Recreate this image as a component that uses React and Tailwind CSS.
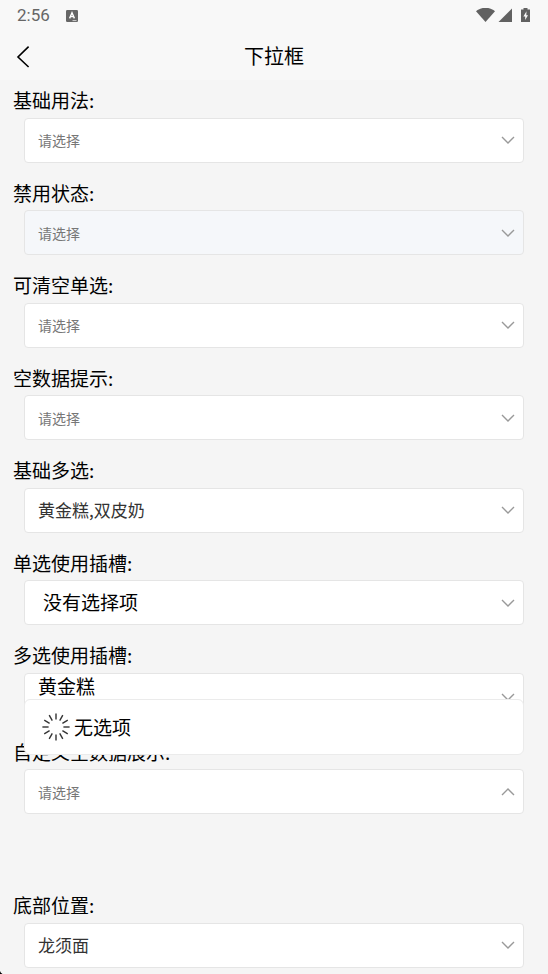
import React from 'react';

const boxClass = 'block w-full rounded border border-[#e5e5e5] bg-white text-left outline-none';

const Chevron = ({ up }) => (
  <svg
    className={`pointer-events-none absolute right-2 top-1/2 h-4 w-4 -translate-y-1/2 ${up ? 'rotate-180' : ''}`}
    viewBox="0 0 16 16"
    fill="none"
    stroke="#999999"
    strokeWidth="1.4"
  >
    <path d="M2 5 L8 11 L14 5" />
  </svg>
);

const Field = ({ id, label, open, className = 'mb-4', children }) => (
  <div className={className}>
    <label htmlFor={id} className="mb-[3px] block text-[19px] leading-normal text-black">{label}</label>
    <div className="relative mx-[11px]">
      {children}
      <Chevron up={open} />
    </div>
  </div>
);

const PlainSelect = ({ id, options = [], disabled }) => (
  <select
    id={id}
    disabled={disabled}
    defaultValue=""
    className={`${boxClass} h-[45px] appearance-none px-[13px] text-sm text-[#777777] disabled:bg-[#f5f7fa] disabled:opacity-100`}
  >
    <option value="">请选择</option>
    {options.map((o) => <option key={o} value={o}>{o}</option>)}
  </select>
);

const Spinner = () => (
  <svg className="h-7 w-7" viewBox="0 0 28 28" stroke="#333333" strokeWidth="1.4">
    {[0, 30, 60, 90, 120, 150, 180, 210, 240, 270, 300, 330].map((deg) => (
      <line key={deg} x1="14" y1="0.4" x2="14" y2="6.6" transform={`rotate(${deg} 14 14)`} />
    ))}
  </svg>
);

const StatusBar = () => (
  <div className="flex h-8 items-center justify-between pl-[17px] pr-4 text-[#666666]">
    <div className="flex items-center gap-4">
      <span className="font-[Roboto,sans-serif] text-[17px]">2:56</span>
      <svg className="h-3 w-3" viewBox="0 0 12 12">
        <rect width="12" height="12" rx="1.2" fill="#666666" />
        <path d="M3.6 8.4 L6 2.8 L8.4 8.4 M4.5 6.6 H7.5" fill="none" stroke="#fff" strokeWidth="1.4" />
        <path d="M6.5 10.6 H10.5" stroke="#fff" strokeWidth="0.7" />
      </svg>
    </div>
    <svg className="h-4 w-14" viewBox="0 0 56 16" fill="#616161">
      <path d="M0 3.2 C5.5 -1.4 13.5 -1.4 19 3.2 L9.5 14 Z" />
      <path d="M36 0.5 V14 H22.5 Z" />
      <path
        fillRule="evenodd"
        d="M47.5 0 H51.5 V1.4 H54 V14 H45 V1.4 H47.5 Z M50.5 3.2 L47.4 8.4 H49.2 V12 L52 7.2 H50.3 Z"
      />
    </svg>
  </div>
);

const App = () => {
  return (
    <div className="relative min-h-screen bg-[#f5f5f5] font-['Noto_Sans_CJK_SC',sans-serif]">
      <header className="bg-[#f8f8f8]">
        <StatusBar />
        <div className="grid h-12 grid-cols-[44px_1fr_44px] items-center">
          <button type="button" aria-label="返回" className="flex h-full items-center pl-4">
            <svg className="h-6 w-4" viewBox="0 0 16 24" fill="none" stroke="#000" strokeWidth="1.6">
              <path d="M12.6 2.6 L2 13 L12.6 23" />
            </svg>
          </button>
          <h1 className="text-center text-xl text-black">下拉框</h1>
        </div>
      </header>

      <main className="px-[13px] pb-1.5 pt-1.5">
        <Field id="basic" label="基础用法:">
          <PlainSelect id="basic" options={['黄金糕', '双皮奶', '龙须面']} />
        </Field>
        <Field id="disabled" label="禁用状态:">
          <PlainSelect id="disabled" disabled />
        </Field>
        <Field id="clearable" label="可清空单选:">
          <PlainSelect id="clearable" options={['黄金糕', '双皮奶', '龙须面']} />
        </Field>
        <Field id="empty" label="空数据提示:">
          <PlainSelect id="empty" />
        </Field>
        <Field id="multiple" label="基础多选:">
          <button id="multiple" type="button" className={`${boxClass} h-[45px] px-[13px] text-[17px] text-[#333333]`}>
            黄金糕,双皮奶
          </button>
        </Field>
        <Field id="single-slot" label="单选使用插槽:">
          <button id="single-slot" type="button" className={`${boxClass} h-[45px] px-[18px] text-[19px] text-black`}>
            没有选择项
          </button>
        </Field>
        <Field id="multi-slot" label="多选使用插槽:">
          <button id="multi-slot" type="button" className={`${boxClass} flex h-[49px] items-start px-[13px] text-[19px] leading-6 text-black`}>
            黄金糕
          </button>
        </Field>
        <Field id="custom-empty" label="自定义空数据展示:" open className="mb-[77px]">
          <PlainSelect id="custom-empty" />
          <div className="absolute bottom-full left-0 right-0 mb-3.5 flex h-14 items-center gap-1 rounded-md border border-[#ebebeb] bg-white px-[17px] text-[19px] text-black">
            <Spinner />
            <span>无选项</span>
          </div>
        </Field>
        <Field id="bottom" label="底部位置:" className="">
          <select
            id="bottom"
            defaultValue="龙须面"
            className={`${boxClass} h-[45px] appearance-none px-[13px] text-[17px] text-[#333333]`}
          >
            <option>黄金糕</option>
            <option>双皮奶</option>
            <option>龙须面</option>
          </select>
        </Field>
      </main>

      <svg className="absolute bottom-0 left-0 h-1 w-1" viewBox="0 0 4 4">
        <path d="M0 1 Q0.5 3 2.5 4 H0 Z" />
      </svg>
    </div>
  );
};

export default App;
